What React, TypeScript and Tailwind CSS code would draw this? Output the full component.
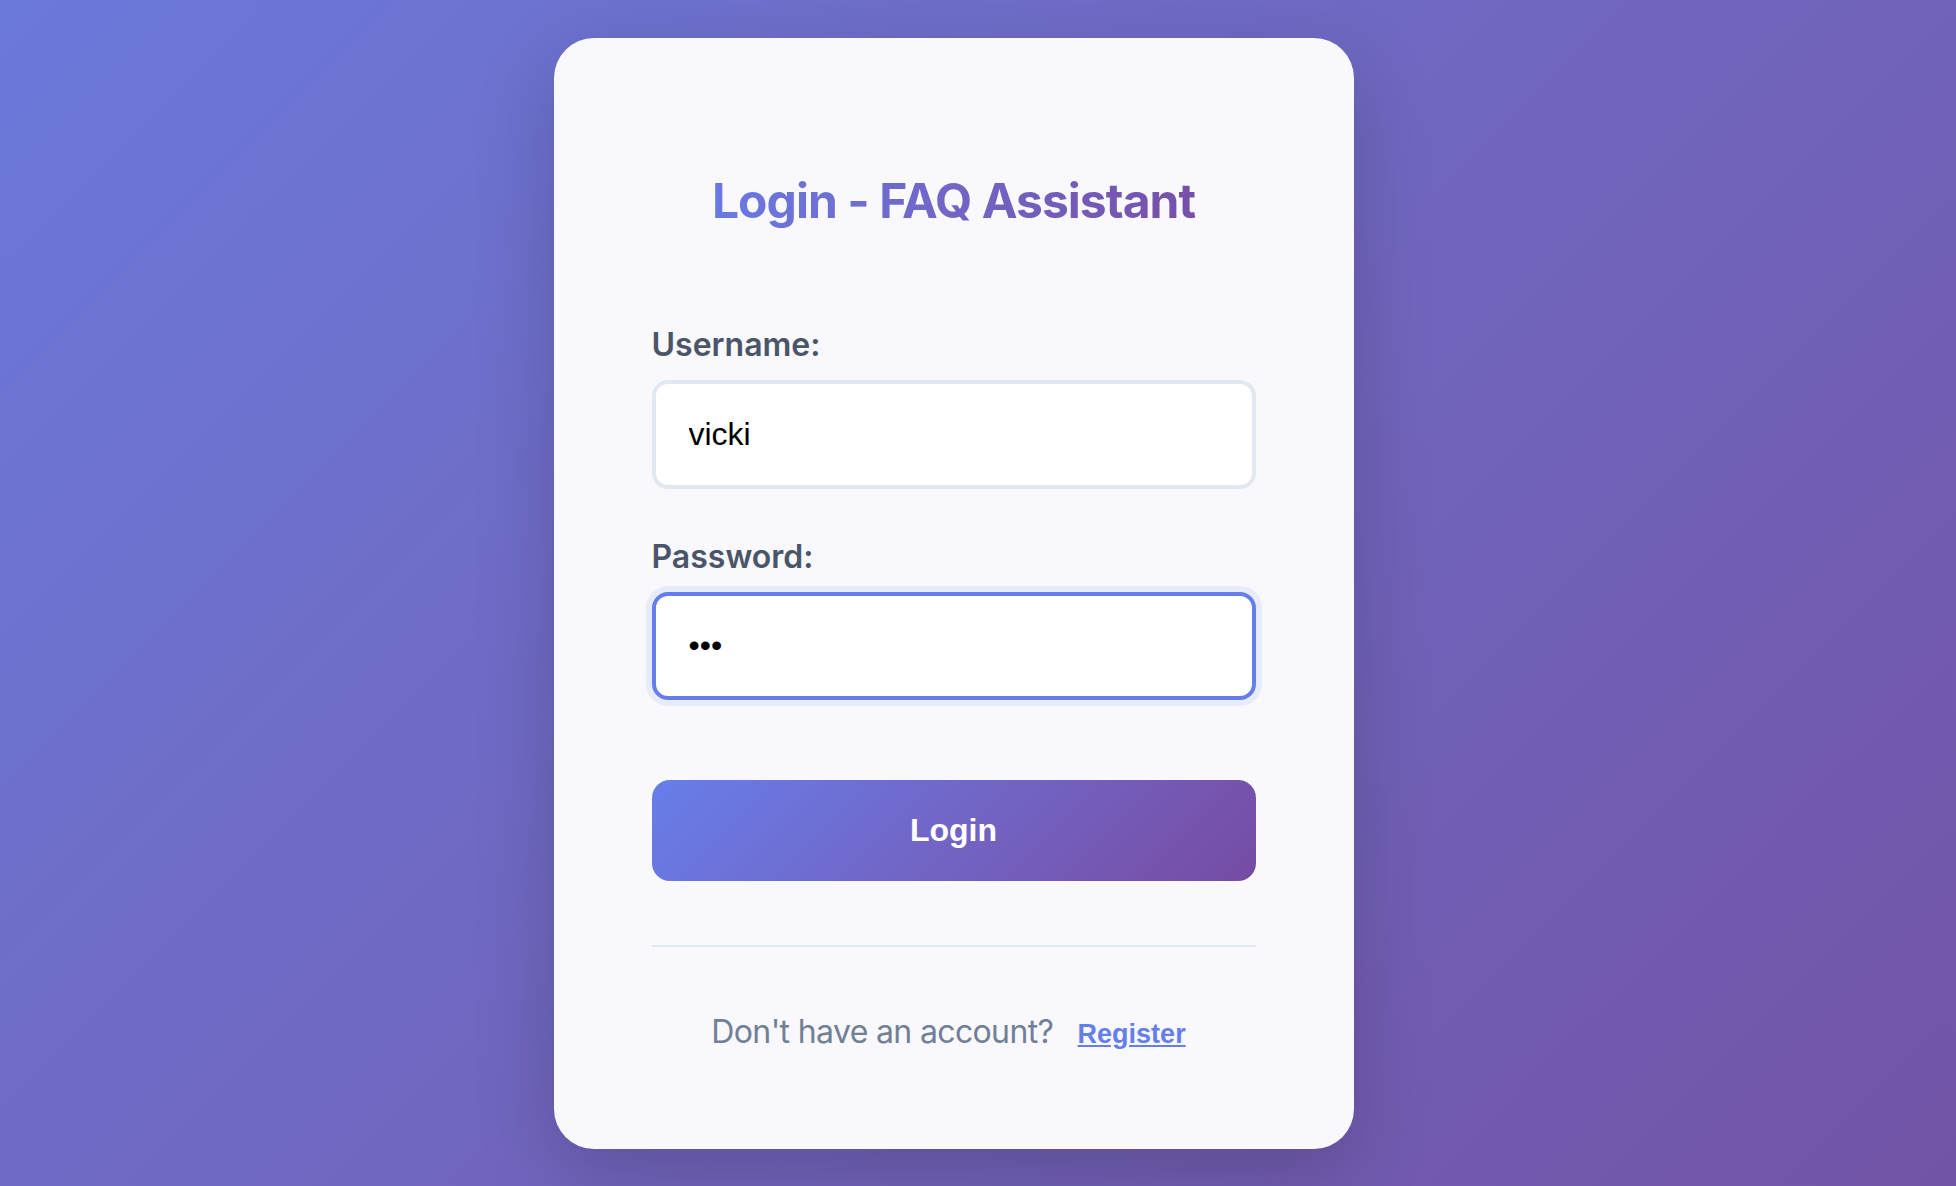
import { useState } from "react";

export default function App() {
  const [username, setUsername] = useState("vicki");
  const [password, setPassword] = useState("abc");

  return (
    <div className="min-h-screen w-full bg-linear-135 from-[#6b79da] to-[#7254a6] flex items-center justify-center pr-[49px] font-['Inter',sans-serif]">
      <div className="w-[800px] rounded-[40px] bg-[#f8f8fd] shadow-[0_25px_80px_rgba(0,0,0,0.18)] px-[98px] pt-[134px] pb-[95px]">
        <h1 className="text-center text-[48px] leading-[58px] font-bold tracking-[-0.02em] bg-linear-90 from-[#667eea] to-[#764ba2] bg-clip-text text-transparent mb-[95px]">
          Login - FAQ Assistant
        </h1>

        <div className="mb-[48px]">
          <label className="block text-[32px] leading-[40px] font-semibold text-[#4a5568] mb-[15px]">
            Username:
          </label>
          <input
            type="text"
            value={username}
            onChange={(e) => setUsername(e.target.value)}
            className="block w-full h-[109px] rounded-[16px] border-4 border-[#e2e8f0] bg-white px-[33px] text-[32px] text-black font-['Liberation_Sans',Arial,sans-serif] outline-none"
          />
        </div>

        <div>
          <label className="block text-[32px] leading-[40px] font-semibold text-[#4a5568] mb-[15px]">
            Password:
          </label>
          <input
            type="password"
            value={password}
            onChange={(e) => setPassword(e.target.value)}
            className="block w-full h-[108px] rounded-[16px] border-4 border-[#667eea] bg-white px-[33px] text-[32px] text-black font-['Liberation_Sans',Arial,sans-serif] outline-none shadow-[0_0_0_6px_rgba(102,126,234,0.1)]"
          />
        </div>

        <button className="mt-[80px] w-full h-[101px] rounded-[18px] bg-linear-135 from-[#667eea] to-[#764ba2] text-white text-[32px] font-bold font-['Liberation_Sans',Arial,sans-serif]">
          Login
        </button>

        <div className="mt-[64px] h-[2px] bg-[#e2e8f0]" />

        <p className="mt-[65px] pr-[10px] text-center text-[32px] leading-[40px] text-[#718096] tracking-[-0.02em]">
          Don't have an account?{" "}
          <a
            href="#"
            className="ml-[16px] text-[27px] font-bold text-[#667eea] underline tracking-normal font-['Liberation_Sans',Arial,sans-serif]"
          >
            Register
          </a>
        </p>
      </div>
    </div>
  );
}
